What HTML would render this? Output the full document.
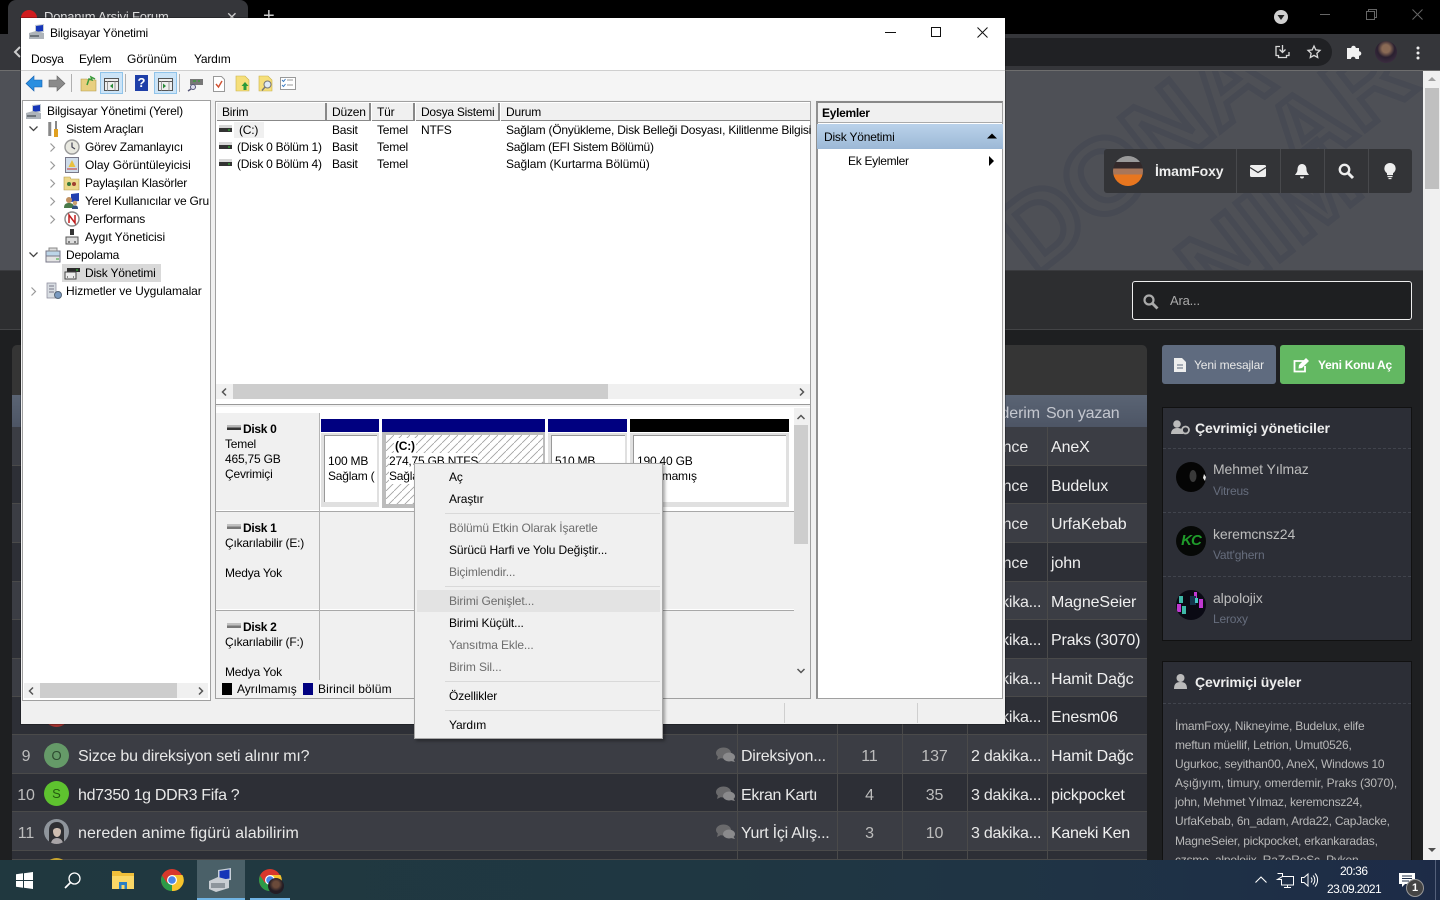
<!DOCTYPE html>
<html lang="tr"><head><meta charset="utf-8"><title>Bilgisayar Yönetimi</title>
<style>
html,body{margin:0;padding:0;width:1440px;height:900px;overflow:hidden;background:#1e1f21}
body{position:relative;font-family:"Liberation Sans",sans-serif}
.a,.t,.w,.f,.m{position:absolute}
.t{white-space:nowrap;line-height:16px;font-size:12px;color:#000;letter-spacing:-.2px}
.f{white-space:nowrap;line-height:20px;font-size:16px;color:#e8e8e8;letter-spacing:-.1px}
.m{white-space:nowrap;line-height:16px;font-size:12px;color:#000;left:449px;letter-spacing:-.12px}
.g{color:#6d6d6d}
.n{color:#bdbdbd;text-align:center}
.r{position:absolute;left:12px;width:1135px}
.r1{background:#3b3d44;border-bottom:1px solid #4a4a4a;box-sizing:border-box}
.r2{background:#2d2f36;border-bottom:1px solid #4a4a4a;box-sizing:border-box}
.v{position:absolute;width:1px;top:427px;height:433px;background:#4a4a4a}
.s{position:absolute;background:#d9d9d9;height:1px;left:445px;width:215px}
.d{position:absolute;left:1163px;width:248px;height:0;border-top:1px dashed #41444d}
svg{position:absolute;overflow:visible}
</style></head><body>

<!-- Chrome -->
<div class="a" style="left:0;top:0;width:1440px;height:34px;background:#000"></div>
<div class="a" style="left:8px;top:0;width:240px;height:34px;background:#35363a;border-radius:8px 8px 0 0"></div>
<div class="a" style="left:21px;top:10px;width:16px;height:16px;border-radius:50%;background:#d01c1f"></div>
<div class="t" style="left:44px;top:9px;font-size:13px;color:#ddd">Donanım Arşivi Forum</div>
<div class="t" style="left:226px;top:9px;color:#ccc;font-size:14px">✕</div>
<div class="t" style="left:263px;top:8px;color:#ccc;font-size:20px">+</div>
<div class="a" style="left:0;top:34px;width:1440px;height:36px;background:#35363a"></div>
<div class="a" style="left:1000px;top:38px;width:332px;height:28px;background:#202124;border-radius:0 14px 14px 0"></div>
<div class="a" style="left:0;top:70px;width:1440px;height:1px;background:#6e6e6e"></div>
<svg style="left:14px;top:46px" width="8" height="12"><path d="M6 1 1 6l5 5" fill="none" stroke="#ccc" stroke-width="2"/></svg>
<svg style="left:1274px;top:10px" width="14" height="14"><circle cx="7" cy="7" r="7" fill="#d0d0d0"/><path d="M3.500 5h7L7 10z" fill="#222"/></svg>
<div class="a" style="left:1320px;top:14px;width:10px;height:1px;background:#666"></div>
<svg style="left:1366px;top:9px" width="11" height="11"><path d="M.5 2.500h8v8h-8zM2.500 2.500v-2h8v8h-2" fill="none" stroke="#666"/></svg>
<svg style="left:1412px;top:9px" width="11" height="11"><path d="M.5.500l10 10M10.500.500l-10 10" stroke="#666"/></svg>
<svg style="left:1275px;top:45px" width="15" height="15"><path d="M5 1.500H1v9h2.500v2h8v-2H14V7M7.500 0v7M4.500 4.500l3 3 3-3" fill="none" stroke="#d8d8d8" stroke-width="1.300"/></svg>
<svg style="left:1307px;top:45px" width="14" height="14"><path d="M7 1l1.800 3.900 4.200.5-3.100 2.900.8 4.200L7 10.400l-3.700 2.100.8-4.200L1 5.400l4.200-.5z" fill="none" stroke="#d8d8d8" stroke-width="1.300"/></svg>
<svg style="left:1347px;top:44px" width="15" height="15"><path d="M0 4h4.200a2.300 2.300 0 1 1 4.600 0H12v3.200a2.300 2.300 0 1 1 0 4.600V15H8.500a2.300 2.300 0 1 0-4.600 0H0z" fill="#f2f2f2"/></svg>
<div class="a" style="left:1375px;top:41px;width:22px;height:22px;border-radius:50%;background:radial-gradient(circle at 50% 35%,#8a6a55 0 22%,#2a2030 48%,#46354a 100%)"></div>
<svg style="left:1416px;top:46px" width="4" height="14"><circle cx="2" cy="2" r="1.500" fill="#eee"/><circle cx="2" cy="7" r="1.500" fill="#eee"/><circle cx="2" cy="12" r="1.500" fill="#eee"/></svg>

<!-- Forum header -->
<div class="a" style="left:0;top:71px;width:1423px;height:199px;background:#4e5056;overflow:hidden">
<svg width="1423" height="199" style="left:0;top:0">
<g font-family="Liberation Sans,sans-serif" font-size="105" font-weight="700" fill="none" stroke="#474a53" stroke-width="6">
<text x="1035" y="205" transform="rotate(-38 1035 205)">DONA</text>
<text x="1215" y="240" transform="rotate(-38 1215 240)">NIM</text>
<text x="1300" y="110" transform="rotate(-38 1300 110)">AR</text>
</g></svg></div>
<div class="a" style="left:0;top:270px;width:1423px;height:1px;background:#3a3b3e"></div>
<div class="a" style="left:0;top:271px;width:1423px;height:58px;background:#2d2e30"></div>
<div class="a" style="left:0;top:329px;width:1423px;height:1px;background:#434446"></div>
<div class="a" style="left:0;top:330px;width:1423px;height:530px;background:#1e1f21"></div>

<!-- User bar -->
<div class="a" style="left:1104px;top:149px;width:308px;height:44px;background:#333437;border-radius:3px"></div>
<div class="a" style="left:1236px;top:149px;width:1px;height:44px;background:#48494c"></div>
<div class="a" style="left:1280px;top:149px;width:1px;height:44px;background:#48494c"></div>
<div class="a" style="left:1324px;top:149px;width:1px;height:44px;background:#48494c"></div>
<div class="a" style="left:1368px;top:149px;width:1px;height:44px;background:#48494c"></div>
<div class="a" style="left:1113px;top:156px;width:30px;height:30px;border-radius:50%;background:linear-gradient(#9a9a9a 0 20%,#33292a 20% 42%,#a8765a 42% 62%,#e8761f 62%)"></div>
<div class="t" style="left:1155px;top:163px;font-size:14px;font-weight:700;color:#eee;letter-spacing:-.1px">İmamFoxy</div>
<svg style="left:1250px;top:165px" width="16" height="12"><rect width="16" height="12" rx="1.500" fill="#eee"/><path d="M0 2.500l8 5 8-5" fill="none" stroke="#333437" stroke-width="1.300"/></svg>
<svg style="left:1295px;top:163px" width="14" height="16"><path d="M7 1c3 0 4.500 2.500 4.500 5.500 0 2.500 1.500 4 2.500 5.500H0c1-1.500 2.500-3 2.500-5.500C2.500 3.500 4 1 7 1z" fill="#eee"/><path d="M5 13.500a2 2 0 0 0 4 0z" fill="#eee"/></svg>
<svg style="left:1338px;top:163px" width="16" height="16"><circle cx="6.500" cy="6.500" r="4.700" fill="none" stroke="#eee" stroke-width="2.400"/><path d="M10 10l5 5" stroke="#eee" stroke-width="3"/></svg>
<svg style="left:1384px;top:163px" width="12" height="16"><path d="M6 0a5.500 5.500 0 0 1 3 10.200V12H3v-1.800A5.500 5.500 0 0 1 6 0z" fill="#eee"/><path d="M3.500 13.500h5M4.500 15.500h3" stroke="#eee" stroke-width="1.300"/></svg>

<!-- Search -->
<div class="a" style="left:1132px;top:281px;width:278px;height:37px;background:#1e1f21;border:1px solid #eee;border-radius:3px"></div>
<svg style="left:1143px;top:294px" width="15" height="15"><circle cx="6" cy="6" r="4.500" fill="none" stroke="#aaa" stroke-width="2.200"/><path d="M9.500 9.500l5 5" stroke="#aaa" stroke-width="2.800"/></svg>
<div class="t" style="left:1170px;top:293px;font-size:13px;color:#aaa">Ara...</div>

<!-- Buttons -->
<div class="a" style="left:1162px;top:345px;width:114px;height:39px;background:#5f6b7f;border-radius:3px"></div>
<svg style="left:1174px;top:358px" width="12" height="14"><path d="M0 0h8l4 4v10H0z" fill="#eee"/><path d="M3 7h6M3 10h6" stroke="#5f6b7f"/></svg>
<div class="t" style="left:1194px;top:357px;color:#e8e8e8;letter-spacing:-.12px">Yeni mesajlar</div>
<div class="a" style="left:1280px;top:345px;width:125px;height:39px;background:#63b862;border-radius:3px"></div>
<svg style="left:1293px;top:358px" width="17" height="15"><path d="M11 3H1.500v10.500H12V8" fill="none" stroke="#fff" stroke-width="1.800"/><path d="M6 7l7-7 3 3-7 7-3.500.5z" fill="#fff"/></svg>
<div class="t" style="left:1318px;top:357px;color:#fff;font-weight:700;letter-spacing:-.25px">Yeni Konu Aç</div>

<!-- Table -->
<div class="a" style="left:12px;top:345px;width:1135px;height:50px;background:#353535;border-radius:5px 5px 0 0"></div>
<div class="r" style="top:395px;height:32px;background:linear-gradient(#5a6474,#4d5565)"></div>
<div class="r r1" style="top:427px;height:39px"></div>
<div class="r r2" style="top:466px;height:38px"></div>
<div class="r r1" style="top:504px;height:39px"></div>
<div class="r r2" style="top:543px;height:39px"></div>
<div class="r r1" style="top:582px;height:38px"></div>
<div class="r r2" style="top:620px;height:39px"></div>
<div class="r r1" style="top:659px;height:38px"></div>
<div class="r r2" style="top:697px;height:38px"></div>
<div class="r r1" style="top:735px;height:39px"></div>
<div class="r r2" style="top:774px;height:38px"></div>
<div class="r r1" style="top:812px;height:39px"></div>
<div class="r r2" style="top:851px;height:9px"></div>
<div class="v" style="left:737px"></div><div class="v" style="left:837px"></div><div class="v" style="left:902px"></div><div class="v" style="left:967px"></div><div class="v" style="left:1047px"></div>

<div class="f" style="left:1005px;top:404px;color:#c4c7cf;width:35px;overflow:hidden;direction:rtl">derim</div>
<div class="f" style="left:1046px;top:404px;color:#c4c7cf;letter-spacing:-.25px">Son yazan</div>

<div class="f" style="left:971px;top:438px">Az önce</div><div class="f" style="left:1051px;top:438px;color:#f0f0f0">AneX</div>
<div class="f" style="left:971px;top:477px">Az önce</div><div class="f" style="left:1051px;top:477px;color:#f0f0f0">Budelux</div>
<div class="f" style="left:971px;top:515px">Az önce</div><div class="f" style="left:1051px;top:515px;color:#f0f0f0">UrfaKebab</div>
<div class="f" style="left:971px;top:554px">Az önce</div><div class="f" style="left:1051px;top:554px;color:#f0f0f0">john</div>
<div class="f" style="left:971px;top:593px;letter-spacing:-.25px">1 dakika...</div><div class="f" style="left:1051px;top:593px;color:#f0f0f0">MagneSeier</div>
<div class="f" style="left:971px;top:631px;letter-spacing:-.25px">1 dakika...</div><div class="f" style="left:1051px;top:631px;color:#f0f0f0;letter-spacing:-.2px">Praks (3070)</div>
<div class="f" style="left:971px;top:670px;letter-spacing:-.25px">1 dakika...</div><div class="f" style="left:1051px;top:670px;color:#f0f0f0">Hamit Dağc</div>
<div class="f" style="left:971px;top:708px;letter-spacing:-.25px">2 dakika...</div><div class="f" style="left:1051px;top:708px;color:#f0f0f0">Enesm06</div>

<div class="a" style="left:44px;top:702px;width:25px;height:25px;border-radius:50%;background:#a3322f"></div>

<div class="f n" style="left:14px;top:747px;width:24px">9</div>
<div class="a" style="left:44px;top:743px;width:25px;height:25px;border-radius:50%;background:#659a68;color:#2d4a30;font-size:13px;line-height:25px;text-align:center">O</div>
<div class="f" style="left:78px;top:747px;letter-spacing:-.2px">Sizce bu direksiyon seti alınır mı?</div>
<div class="f" style="left:741px;top:747px;letter-spacing:-.25px">Direksiyon...</div>
<div class="f n" style="left:838px;top:747px;width:63px">11</div><div class="f n" style="left:903px;top:747px;width:63px">137</div>
<div class="f" style="left:971px;top:747px;letter-spacing:-.25px">2 dakika...</div><div class="f" style="left:1051px;top:747px;color:#f0f0f0">Hamit Dağc</div>

<div class="f n" style="left:14px;top:786px;width:24px">10</div>
<div class="a" style="left:44px;top:781px;width:25px;height:25px;border-radius:50%;background:#5ec22f;color:#245a10;font-size:13px;line-height:25px;text-align:center">S</div>
<div class="f" style="left:78px;top:786px;letter-spacing:-.32px">hd7350 1g DDR3 Fifa ?</div>
<div class="f" style="left:741px;top:786px;letter-spacing:-.35px">Ekran Kartı</div>
<div class="f n" style="left:838px;top:786px;width:63px">4</div><div class="f n" style="left:903px;top:786px;width:63px">35</div>
<div class="f" style="left:971px;top:786px;letter-spacing:-.25px">3 dakika...</div><div class="f" style="left:1051px;top:786px;color:#f0f0f0;letter-spacing:-.2px">pickpocket</div>

<div class="f n" style="left:14px;top:824px;width:24px">11</div>
<svg style="left:44px;top:819px" width="25" height="25"><defs><clipPath id="av"><circle cx="12.500" cy="12.500" r="12.500"/></clipPath></defs><g clip-path="url(#av)"><rect width="25" height="25" fill="#8f959c"/><path d="M5 25V11C5 5 9 3 13 3s7 3 7 8v14z" fill="#2f3034"/><path d="M9 12c0-2 2-3 4-3s4 1 4 3c0 4-2 6-4 6s-4-2-4-6z" fill="#d0bfb2"/><path d="M7 25c0-4 3-6 6-6s6 2 6 6z" fill="#a9a5a8"/></g></svg>
<div class="f" style="left:78px;top:824px;letter-spacing:.07px">nereden anime figürü alabilirim</div>
<div class="f" style="left:741px;top:824px;letter-spacing:-.25px">Yurt İçi Alış...</div>
<div class="f n" style="left:838px;top:824px;width:63px">3</div><div class="f n" style="left:903px;top:824px;width:63px">10</div>
<div class="f" style="left:971px;top:824px;letter-spacing:-.25px">3 dakika...</div><div class="f" style="left:1051px;top:824px;color:#f0f0f0;letter-spacing:-.3px">Kaneki Ken</div>

<div class="a" style="left:44px;top:858px;width:25px;height:25px;border-radius:50%;background:#c9a52f"></div>

<svg style="left:716px;top:747px" width="20" height="16"><ellipse cx="7.500" cy="6" rx="7.500" ry="5.500" fill="#6a6a6c"/><path d="M2 9l-1 4 4-2z" fill="#6a6a6c"/><ellipse cx="13" cy="10" rx="6" ry="4.500" fill="#8a8a8c"/><path d="M17 12l2 3-4-1z" fill="#8a8a8c"/></svg>
<svg style="left:716px;top:786px" width="20" height="16"><ellipse cx="7.500" cy="6" rx="7.500" ry="5.500" fill="#6a6a6c"/><path d="M2 9l-1 4 4-2z" fill="#6a6a6c"/><ellipse cx="13" cy="10" rx="6" ry="4.500" fill="#8a8a8c"/><path d="M17 12l2 3-4-1z" fill="#8a8a8c"/></svg>
<svg style="left:716px;top:824px" width="20" height="16"><ellipse cx="7.500" cy="6" rx="7.500" ry="5.500" fill="#6a6a6c"/><path d="M2 9l-1 4 4-2z" fill="#6a6a6c"/><ellipse cx="13" cy="10" rx="6" ry="4.500" fill="#8a8a8c"/><path d="M17 12l2 3-4-1z" fill="#8a8a8c"/></svg>

<!-- Sidebar panels -->
<div class="a" style="left:1162px;top:407px;width:248px;height:232px;background:#2c2e36;border:1px solid #111"></div>
<svg style="left:1171px;top:420px" width="19" height="15"><circle cx="6" cy="4" r="3.800" fill="#bbb"/><path d="M0 14c0-4 2.500-6 6-6s5 1 6 3v3z" fill="#bbb"/><circle cx="14.500" cy="10" r="3.500" fill="none" stroke="#bbb" stroke-width="1.800"/></svg>
<div class="t" style="left:1195px;top:420px;font-size:14px;font-weight:700;color:#eee;letter-spacing:-.1px">Çevrimiçi yöneticiler</div>
<div class="d" style="top:448px"></div><div class="d" style="top:512px"></div><div class="d" style="top:576px"></div>
<svg style="left:1176px;top:462px" width="30" height="30"><circle cx="15" cy="15" r="15" fill="#050505"/><ellipse cx="17" cy="14" rx="3.500" ry="6" fill="#3a3a3a"/><path d="M28 12l2 3-1 4-2-3z" fill="#e8e8e8"/></svg>
<div class="t" style="left:1213px;top:461px;font-size:14px;color:#bdbdbd;letter-spacing:-.1px">Mehmet Yılmaz</div>
<div class="t" style="left:1213px;top:483px;color:#666d7d">Vitreus</div>
<div class="a" style="left:1176px;top:526px;width:30px;height:30px;border-radius:50%;background:#060806;color:#1f9a2a;font-weight:700;font-style:italic;font-size:15px;line-height:30px;text-align:center;letter-spacing:-1px">KC</div>
<div class="t" style="left:1213px;top:526px;font-size:14px;color:#bdbdbd;letter-spacing:-.1px">keremcnsz24</div>
<div class="t" style="left:1213px;top:547px;color:#666d7d">Vatt'ghern</div>
<svg style="left:1176px;top:590px" width="30" height="30"><defs><clipPath id="av2"><circle cx="15" cy="15" r="15"/></clipPath></defs><g clip-path="url(#av2)"><rect width="30" height="30" fill="#0a0a14"/><path d="M3 6h4v7H3zM6 16h4v8H6z" fill="#3fb8a8"/><path d="M1 14h4v8H1zM23 9h4v9h-4zM18 2h3v6h-3z" fill="#c038d0"/><path d="M14 6h6v9h-6z" fill="#13344a"/><path d="M19 8h3v5h-3z" fill="#46c8c8"/></g></svg>
<div class="t" style="left:1213px;top:590px;font-size:14px;color:#bdbdbd;letter-spacing:-.1px">alpolojix</div>
<div class="t" style="left:1213px;top:611px;color:#666d7d">Leroxy</div>

<div class="a" style="left:1162px;top:661px;width:248px;height:210px;background:#2c2e36;border:1px solid #111"></div>
<svg style="left:1174px;top:674px" width="13" height="15"><circle cx="6.500" cy="4" r="4" fill="#bbb"/><path d="M0 15c0-5 2-7 6.500-7S13 10 13 15z" fill="#bbb"/></svg>
<div class="t" style="left:1195px;top:674px;font-size:14px;font-weight:700;color:#eee;letter-spacing:-.12px">Çevrimiçi üyeler</div>
<div class="d" style="top:703px"></div>
<div class="t" style="left:1175px;top:718px;color:#b8b8b8;letter-spacing:-.2px">İmamFoxy, Nikneyime, Budelux, elife</div>
<div class="t" style="left:1175px;top:737px;color:#b8b8b8;letter-spacing:-.2px">meftun müellif, Letrion, Umut0526,</div>
<div class="t" style="left:1175px;top:756px;color:#b8b8b8;letter-spacing:-.2px">Ugurkoc, seyithan00, AneX, Windows 10</div>
<div class="t" style="left:1175px;top:775px;color:#b8b8b8;letter-spacing:-.12px">Aşığıyım, timury, omerdemir, Praks (3070),</div>
<div class="t" style="left:1175px;top:794px;color:#b8b8b8;letter-spacing:-.2px">john, Mehmet Yılmaz, keremcnsz24,</div>
<div class="t" style="left:1175px;top:813px;color:#b8b8b8;letter-spacing:-.2px">UrfaKebab, 6n_adam, Arda22, CapJacke,</div>
<div class="t" style="left:1175px;top:833px;color:#b8b8b8;letter-spacing:-.2px">MagneSeier, pickpocket, erkankaradas,</div>
<div class="t" style="left:1175px;top:852px;color:#b8b8b8;letter-spacing:-.2px">czsmo, alpolojix, RaZeRoSc, Pyken</div>

<!-- Page scrollbar -->
<div class="a" style="left:1423px;top:71px;width:17px;height:789px;background:#f0f0f0"></div>
<div class="a" style="left:1425px;top:88px;width:14px;height:101px;background:#c0c0c0"></div>
<svg style="left:1428px;top:77px" width="8" height="5"><path d="M0 4h8L4 0z" fill="#a0a0a0"/></svg>
<svg style="left:1428px;top:848px" width="8" height="5"><path d="M0 0h8L4 4z" fill="#505050"/></svg>

<!-- Taskbar -->
<div class="a" style="left:0;top:860px;width:1440px;height:40px;background:linear-gradient(90deg,#20383f 0,#1f3742 50%,#1f3345 75%,#1d2b47 100%)"></div>
<svg style="left:16px;top:872px" width="17" height="17"><path d="M0 2.300 7 1.300v6.700H0zM8 1.200 17 0v8H8zM0 9h7v6.700l-7-1zM8 9h9v8l-9-1.200z" fill="#fff"/></svg>
<svg style="left:64px;top:872px" width="17" height="17"><circle cx="10.500" cy="6.500" r="5.500" fill="none" stroke="#fff" stroke-width="1.300"/><path d="M6.500 10.500 1 16" stroke="#fff" stroke-width="1.700"/></svg>
<svg style="left:112px;top:871px" width="22" height="18"><path d="M0 0h8l2 2h12v16H0z" fill="#f0bf3a"/><path d="M0 5h22v13H0z" fill="#fad766"/><path d="M7 11h8v7h-2.500v-4h-3v4H7z" fill="#2a7fc4"/></svg>
<svg style="left:161px;top:869px" width="22" height="22"><circle cx="11" cy="11" r="11" fill="#d8382c"/><path d="M11 11 1.500 16.500A11 11 0 0 0 11 22z" fill="#2a9c48"/><path d="M11 11V22A11 11 0 0 0 21.500 6H11z" fill="#f6c42c"/><path d="M11 11 1.500 16.500 A11 11 0 0 1 1 6.500L6 14z" fill="#2a9c48"/><circle cx="11" cy="11" r="5" fill="#fff"/><circle cx="11" cy="11" r="3.800" fill="#4a86e8"/></svg>
<div class="a" style="left:197px;top:860px;width:48px;height:40px;background:#4a6068"></div>
<div class="a" style="left:197px;top:898px;width:48px;height:2px;background:#70b4e4"></div>
<svg style="left:209px;top:868px" width="24" height="24"><path d="M9 2 22 0v12L9 13z" fill="#c8d0d8"/><path d="M10.500 3 20.500 1.500v9L10.500 12z" fill="#1636b8"/><path d="M0 13 9 9l11 3v8L7 24l-7-3z" fill="#c9ced3"/><path d="M2 15h14v5H2z" fill="#8d959c"/></svg>
<div class="a" style="left:250px;top:898px;width:40px;height:2px;background:#70b4e4"></div>
<svg style="left:259px;top:869px" width="22" height="22"><circle cx="11" cy="11" r="11" fill="#d8382c"/><path d="M11 11 1.500 16.500A11 11 0 0 0 11 22z" fill="#2a9c48"/><path d="M11 11V22A11 11 0 0 0 21.500 6H11z" fill="#f6c42c"/><path d="M11 11 1.500 16.500 A11 11 0 0 1 1 6.500L6 14z" fill="#2a9c48"/><circle cx="11" cy="11" r="5" fill="#fff"/><circle cx="11" cy="11" r="3.800" fill="#4a86e8"/></svg>
<div class="a" style="left:268px;top:878px;width:16px;height:16px;border-radius:50%;background:radial-gradient(circle at 50% 40%,#6a4a3a 0 25%,#231c24 55%)"></div>
<svg style="left:1255px;top:876px" width="12" height="7"><path d="M.5 6.500 6 1l5.500 5.500" fill="none" stroke="#fff" stroke-width="1.100"/></svg>
<svg style="left:1277px;top:873px" width="17" height="15"><path d="M.5.500h5v3M5.500 3.500h11v8.500h-12V6.500H.5zM10.500 12v2.500M7 14.500h7" fill="none" stroke="#fff"/></svg>
<svg style="left:1301px;top:873px" width="17" height="14"><path d="M.5 4.500h2.500L7 1v12L3 9.500H.5z" fill="none" stroke="#fff"/><path d="M10 4.500a3.500 3.500 0 0 1 0 5M12 2.500a6.500 6.500 0 0 1 0 9M14 .500a9.500 9.500 0 0 1 0 13" fill="none" stroke="#fff"/></svg>
<div class="t" style="left:1340px;top:863px;color:#fff;letter-spacing:-.5px">20:36</div>
<div class="t" style="left:1327px;top:881px;color:#fff;letter-spacing:-.6px">23.09.2021</div>
<svg style="left:1399px;top:873px" width="16" height="14"><path d="M0 0h16v11H6l-3 3v-3H0z" fill="#fff"/><path d="M3 3h10M3 5.500h10M3 8h7" stroke="#20304a"/></svg>
<div class="a" style="left:1406px;top:879px;width:16px;height:16px;border-radius:50%;background:#444;border:1px solid #999;color:#fff;font-size:11px;font-weight:700;line-height:16px;text-align:center">1</div>
<div class="a" style="left:1435px;top:860px;width:1px;height:40px;background:#54607a"></div>

<!-- MMC Window -->
<div class="w" id="win" style="left:21px;top:18px;width:984px;height:706px;background:#f0f0f0;box-shadow:0 0 0 1px rgba(0,0,0,.25)"></div>
<div class="a" style="left:21px;top:18px;width:984px;height:52px;background:#fff"></div>
<div class="a" style="left:21px;top:70px;width:984px;height:1px;background:#cfcfcf"></div>
<div class="a" style="left:21px;top:71px;width:984px;height:29px;background:#f5f5f5"></div>
<svg style="left:29px;top:24px" width="16" height="16"><path d="M6 1 15 0v8L6 9z" fill="#c5ccd3"/><path d="M7 2l7-1v6l-7 1z" fill="#1636b8"/><path d="M0 9l7-2 8 2v6H0z" fill="#aeb4ba"/><path d="M1 11h9v2H1z" fill="#6c737a"/></svg>
<div class="t" style="left:50px;top:25px">Bilgisayar Yönetimi</div>
<div class="a" style="left:885px;top:32px;width:11px;height:1px;background:#111"></div>
<div class="a" style="left:931px;top:27px;width:8px;height:8px;border:1px solid #111"></div>
<svg style="left:977px;top:27px" width="11" height="11"><path d="M.5.500l10 10M10.500.500l-10 10" stroke="#111"/></svg>
<div class="t" style="left:31px;top:51px;letter-spacing:-.3px">Dosya</div>
<div class="t" style="left:79px;top:51px">Eylem</div>
<div class="t" style="left:127px;top:51px;letter-spacing:-.02px">Görünüm</div>
<div class="t" style="left:194px;top:51px">Yardım</div>

<!-- Toolbar -->
<svg style="left:26px;top:76px" width="16" height="15"><path d="M8 0v4h8v7H8v4L0 7.500z" fill="#2a8fe0" stroke="#1560b0" stroke-width=".6"/></svg>
<svg style="left:49px;top:76px" width="16" height="15"><path d="M8 0v4H0v7h8v4l8-7.500z" fill="#8a8a8a" stroke="#666" stroke-width=".6"/></svg>
<div class="a" style="left:71px;top:74px;width:1px;height:18px;background:#b0b0b0"></div>
<svg style="left:81px;top:76px" width="15" height="15"><path d="M0 3h6l1 1h8v11H0z" fill="#e8cf80" stroke="#b49a4a" stroke-width=".6"/><path d="M6 9l2-6 3 1-1-3 4 2" fill="none" stroke="#3a9a3a" stroke-width="1.500"/></svg>
<div class="a" style="left:100px;top:72px;width:21px;height:20px;background:#cce4f7;border:1px solid #90c4ea"></div>
<svg style="left:104px;top:78px" width="15" height="13"><path d="M.5.500h14v12H.5zM.5 3.500h14" fill="#eee" stroke="#555"/><path d="M9 5.500l-3 2.500 3 2.500z" fill="#2a8a3a"/><path d="M3.500 3.500v9M11 3.500v9" stroke="#999"/></svg>
<div class="a" style="left:125px;top:74px;width:1px;height:18px;background:#b0b0b0"></div>
<div class="a" style="left:135px;top:75px;width:13px;height:16px;background:#1f3fa8;color:#fff;font-weight:700;font-size:13px;line-height:16px;text-align:center">?</div>
<div class="a" style="left:154px;top:72px;width:21px;height:20px;background:#cce4f7;border:1px solid #90c4ea"></div>
<svg style="left:158px;top:78px" width="15" height="13"><path d="M.5.500h14v12H.5zM.5 3.500h14" fill="#eee" stroke="#555"/><path d="M5 5.500l3 2.500-3 2.500z" fill="#2a8a3a"/><path d="M3.500 3.500v9M11 3.500v9" stroke="#999"/></svg>
<div class="a" style="left:179px;top:74px;width:1px;height:18px;background:#b0b0b0"></div>
<svg style="left:188px;top:78px" width="15" height="13"><path d="M2 1h13v6H2z" fill="#777"/><path d="M5 3h3M10 3h2" stroke="#2a2"/><circle cx="5" cy="9" r="2.500" fill="#dde" stroke="#557"/><path d="M3 11l-3 2" stroke="#557" stroke-width="1.400"/></svg>
<svg style="left:213px;top:76px" width="12" height="16"><path d="M.5.500h8l3 3v12H.5z" fill="#fff" stroke="#999"/><path d="M3 8l2.500 3L9 5" fill="none" stroke="#d05030" stroke-width="1.400"/></svg>
<svg style="left:236px;top:76px" width="14" height="15"><path d="M0 0h9l4 4v11H0z" fill="#f6df7a" stroke="#c8b24a" stroke-width=".6"/><path d="M9 6l-3.500 4h2v4h3v-4h2z" fill="#2a9a3a"/></svg>
<svg style="left:259px;top:76px" width="14" height="15"><path d="M0 0h9l4 4v11H0z" fill="#f6df7a" stroke="#c8b24a" stroke-width=".6"/><circle cx="8.500" cy="8.500" r="3.500" fill="#dfeaf5" stroke="#777"/><path d="M6 11l-3 3.500" stroke="#777" stroke-width="1.400"/></svg>
<svg style="left:280px;top:77px" width="16" height="13"><path d="M.5.500h15v12H.5z" fill="#fff" stroke="#999"/><path d="M2 3l1.500 1.500L5.500 2M2 8l1.500 1.500L5.500 7" fill="none" stroke="#3a7ac0"/><path d="M7 3h6M7 8h6" stroke="#999"/></svg>

<!-- Left pane -->
<div class="a" style="left:22px;top:100px;width:187px;height:599px;background:#fff;border:1px solid #a0a0a0"></div>
<svg style="left:26px;top:104px" width="16" height="16"><path d="M6 1 15 0v8L6 9z" fill="#c5ccd3"/><path d="M7 2l7-1v6l-7 1z" fill="#1636b8"/><path d="M0 9l7-2 8 2v6H0z" fill="#aeb4ba"/><path d="M1 11h9v2H1z" fill="#6c737a"/></svg>
<div class="t" style="left:47px;top:103px;letter-spacing:-.15px">Bilgisayar Yönetimi (Yerel)</div>
<svg style="left:29px;top:126px" width="9" height="6"><path d="M.5.500 4.500 4.500 8.500.500" fill="none" stroke="#444" stroke-width="1.300"/></svg>
<svg style="left:47px;top:121px" width="12" height="16"><path d="M2 1v14M3.500 1v14" stroke="#888" stroke-width="1.500"/><rect x="7" y="8" width="4" height="8" fill="#e0a020"/><path d="M9 0v8" stroke="#888" stroke-width="2"/></svg>
<div class="t" style="left:66px;top:121px">Sistem Araçları</div>
<svg style="left:50px;top:143px" width="6" height="9"><path d="M.5.500 4.500 4.500.500 8.500" fill="none" stroke="#999" stroke-width="1.200"/></svg>
<svg style="left:64px;top:139px" width="16" height="16"><circle cx="8" cy="8" r="7" fill="#e8e8e0" stroke="#999" stroke-width="1.400"/><path d="M8 3.500V8l3 2" fill="none" stroke="#445" stroke-width="1.200"/></svg>
<div class="t" style="left:85px;top:139px">Görev Zamanlayıcı</div>
<svg style="left:50px;top:161px" width="6" height="9"><path d="M.5.500 4.500 4.500.500 8.500" fill="none" stroke="#999" stroke-width="1.200"/></svg>
<svg style="left:65px;top:157px" width="14" height="16"><path d="M.5.500h13v15H.5z" fill="#cfdcea" stroke="#778"/><path d="M7 3 10.500 10h-7z" fill="#e8c040"/><path d="M2 12h10" stroke="#c03030"/></svg>
<div class="t" style="left:85px;top:157px;letter-spacing:-.05px">Olay Görüntüleyicisi</div>
<svg style="left:50px;top:179px" width="6" height="9"><path d="M.5.500 4.500 4.500.500 8.500" fill="none" stroke="#999" stroke-width="1.200"/></svg>
<svg style="left:64px;top:176px" width="15" height="14"><path d="M0 1h6l1 2h8v11H0z" fill="#ecd88a" stroke="#b49a4a" stroke-width=".6"/><circle cx="5" cy="8" r="2" fill="#3a7a3a"/><circle cx="10" cy="8" r="2" fill="#a04030"/></svg>
<div class="t" style="left:85px;top:175px">Paylaşılan Klasörler</div>
<svg style="left:50px;top:197px" width="6" height="9"><path d="M.5.500 4.500 4.500.500 8.500" fill="none" stroke="#999" stroke-width="1.200"/></svg>
<svg style="left:64px;top:193px" width="16" height="16"><path d="M7 1l8-1v8l-8 1z" fill="#2040b0"/><circle cx="5" cy="7" r="3" fill="#c09060"/><path d="M0 15c0-4 2-5 5-5s5 1 5 5z" fill="#4a7a4a"/><circle cx="11" cy="10" r="2.200" fill="#c8a070"/><path d="M8 16c0-3 1-3.500 3-3.500s3 .5 3 3.500z" fill="#305080"/></svg>
<div class="t" style="left:85px;top:193px;width:124px;overflow:hidden">Yerel Kullanıcılar ve Gru</div>
<svg style="left:50px;top:215px" width="6" height="9"><path d="M.5.500 4.500 4.500.500 8.500" fill="none" stroke="#999" stroke-width="1.200"/></svg>
<svg style="left:64px;top:211px" width="16" height="16"><circle cx="8" cy="8" r="7" fill="#fff" stroke="#888" stroke-width="1.400"/><path d="M5 12V4l6 8V4" fill="none" stroke="#c02020" stroke-width="1.500"/></svg>
<div class="t" style="left:85px;top:211px">Performans</div>
<svg style="left:65px;top:229px" width="14" height="16"><path d="M5 0h4v6H5z" fill="#333"/><path d="M1 8h12v7H1z" fill="#dcdcdc" stroke="#555"/><path d="M3 13h2M9 13h2" stroke="#222"/></svg>
<div class="t" style="left:85px;top:229px;letter-spacing:-.1px">Aygıt Yöneticisi</div>
<svg style="left:29px;top:252px" width="9" height="6"><path d="M.5.500 4.500 4.500 8.500.500" fill="none" stroke="#444" stroke-width="1.300"/></svg>
<svg style="left:45px;top:247px" width="16" height="16"><path d="M1 4h14v5H1z" fill="#bcd5e8" stroke="#778"/><path d="M4 1h8v3H4z" fill="#ddd" stroke="#888"/><path d="M1 9h14v6H1z" fill="#e4e4e4" stroke="#778"/><path d="M11 12h3" stroke="#3a3"/></svg>
<div class="t" style="left:66px;top:247px">Depolama</div>
<div class="a" style="left:62px;top:264px;width:99px;height:18px;background:#d9d9d9"></div>
<svg style="left:64px;top:268px" width="16" height="11"><path d="M3 0h13v4H3z" fill="#2a2a2a"/><path d="M12 2h2" stroke="#3c3"/><path d="M1 4h11v7H1z" fill="#ececec" stroke="#444"/><path d="M3 9h1M9 9h1" stroke="#222"/></svg>
<div class="t" style="left:85px;top:265px">Disk Yönetimi</div>
<svg style="left:31px;top:287px" width="6" height="9"><path d="M.5.500 4.500 4.500.500 8.500" fill="none" stroke="#999" stroke-width="1.200"/></svg>
<svg style="left:47px;top:283px" width="15" height="16"><path d="M0 0h9v15H0z" fill="#d8dde2" stroke="#889" stroke-width=".7"/><path d="M2 3h5M2 6h5M2 9h5" stroke="#778"/><circle cx="11" cy="12" r="3.500" fill="#7a9ac0" stroke="#567"/></svg>
<div class="t" style="left:66px;top:283px;letter-spacing:-.07px">Hizmetler ve Uygulamalar</div>
<div class="a" style="left:24px;top:683px;width:184px;height:15px;background:#f0f0f0"></div>
<div class="a" style="left:40px;top:683px;width:137px;height:15px;background:#cdcdcd"></div>
<svg style="left:28px;top:687px" width="6" height="8"><path d="M5 .500 1.500 4 5 7.500" fill="none" stroke="#555" stroke-width="1.500"/></svg>
<svg style="left:198px;top:687px" width="6" height="8"><path d="M1 .500 4.500 4 1 7.500" fill="none" stroke="#555" stroke-width="1.500"/></svg>

<!-- Center pane -->
<div class="a" style="left:215px;top:101px;width:596px;height:598px;background:#fff;border:1px solid #a0a0a0;box-sizing:border-box"></div>
<div class="a" style="left:217px;top:103px;width:108px;height:17px;background:#f0f0f0;border-right:2px solid #888;border-bottom:1px solid #888"></div>
<div class="a" style="left:327px;top:103px;width:42px;height:17px;background:#f0f0f0;border-right:2px solid #888;border-bottom:1px solid #888"></div>
<div class="a" style="left:372px;top:103px;width:41px;height:17px;background:#f0f0f0;border-right:2px solid #888;border-bottom:1px solid #888"></div>
<div class="a" style="left:416px;top:103px;width:82px;height:17px;background:#f0f0f0;border-right:2px solid #888;border-bottom:1px solid #888"></div>
<div class="a" style="left:501px;top:103px;width:309px;height:17px;background:#f0f0f0;border-bottom:1px solid #888"></div>
<div class="t" style="left:222px;top:104px">Birim</div>
<div class="t" style="left:332px;top:104px">Düzen</div>
<div class="t" style="left:377px;top:104px">Tür</div>
<div class="t" style="left:421px;top:104px;letter-spacing:-.25px">Dosya Sistemi</div>
<div class="t" style="left:506px;top:104px">Durum</div>
<div class="a" style="left:234px;top:122px;width:30px;height:16px;background:#f0f0f0"></div>
<svg style="left:219px;top:125px" width="14" height="8"><path d="M0 0h13v3H0z" fill="#d8d8d8"/><path d="M0 3h13v4H0z" fill="#333"/><path d="M9 5h2" stroke="#3c3"/></svg>
<svg style="left:219px;top:142px" width="14" height="8"><path d="M0 0h13v3H0z" fill="#d8d8d8"/><path d="M0 3h13v4H0z" fill="#333"/><path d="M9 5h2" stroke="#3c3"/></svg>
<svg style="left:219px;top:159px" width="14" height="8"><path d="M0 0h13v3H0z" fill="#d8d8d8"/><path d="M0 3h13v4H0z" fill="#333"/><path d="M9 5h2" stroke="#3c3"/></svg>
<div class="t" style="left:239px;top:122px">(C:)</div><div class="t" style="left:332px;top:122px">Basit</div><div class="t" style="left:377px;top:122px">Temel</div><div class="t" style="left:421px;top:122px">NTFS</div>
<div class="t" style="left:506px;top:122px;width:305px;overflow:hidden;letter-spacing:-.22px">Sağlam (Önyükleme, Disk Belleği Dosyası, Kilitlenme Bilgisi, Birincil bölüm)</div>
<div class="t" style="left:237px;top:139px;letter-spacing:-.25px">(Disk 0 Bölüm 1)</div><div class="t" style="left:332px;top:139px">Basit</div><div class="t" style="left:377px;top:139px">Temel</div><div class="t" style="left:506px;top:139px;letter-spacing:-.27px">Sağlam (EFI Sistem Bölümü)</div>
<div class="t" style="left:237px;top:156px;letter-spacing:-.25px">(Disk 0 Bölüm 4)</div><div class="t" style="left:332px;top:156px">Basit</div><div class="t" style="left:377px;top:156px">Temel</div><div class="t" style="left:506px;top:156px;letter-spacing:-.07px">Sağlam (Kurtarma Bölümü)</div>
<div class="a" style="left:216px;top:384px;width:594px;height:15px;background:#f0f0f0"></div>
<div class="a" style="left:233px;top:384px;width:375px;height:15px;background:#cdcdcd"></div>
<svg style="left:221px;top:388px" width="6" height="8"><path d="M5 .500 1.500 4 5 7.500" fill="none" stroke="#555" stroke-width="1.500"/></svg>
<svg style="left:799px;top:388px" width="6" height="8"><path d="M1 .500 4.500 4 1 7.500" fill="none" stroke="#555" stroke-width="1.500"/></svg>
<div class="a" style="left:216px;top:399px;width:594px;height:9px;background:#fff"></div>
<div class="a" style="left:216px;top:404px;width:594px;height:3px;background:#f0f0f0;border-top:1px solid #999;box-sizing:border-box"></div>

<!-- Disk area -->
<div class="a" style="left:216px;top:407px;width:594px;height:273px;background:#fff"></div>
<div class="a" style="left:216px;top:413px;width:103px;height:97px;background:#f0f0f0"></div>
<div class="a" style="left:216px;top:512px;width:103px;height:97px;background:#f0f0f0"></div>
<div class="a" style="left:216px;top:611px;width:103px;height:69px;background:#f0f0f0"></div>
<div class="a" style="left:320px;top:512px;width:474px;height:97px;background:#f0f0f0"></div>
<div class="a" style="left:320px;top:611px;width:474px;height:69px;background:#f0f0f0"></div>
<div class="a" style="left:216px;top:511px;width:578px;height:1px;background:#a8a8a8"></div>
<div class="a" style="left:216px;top:610px;width:578px;height:1px;background:#a8a8a8"></div>
<div class="a" style="left:319px;top:413px;width:1px;height:267px;background:#b4b4b4"></div>
<div class="a" style="left:227px;top:425px;width:14px;height:5px;background:linear-gradient(#b8b8b8 50%,#333 50%)"></div>
<div class="t" style="left:243px;top:421px;font-weight:700;letter-spacing:-.3px">Disk 0</div>
<div class="t" style="left:225px;top:436px">Temel</div><div class="t" style="left:225px;top:451px">465,75 GB</div><div class="t" style="left:225px;top:466px">Çevrimiçi</div>
<div class="a" style="left:227px;top:524px;width:14px;height:5px;background:linear-gradient(#c0c0c0 50%,#777 50%)"></div>
<div class="t" style="left:243px;top:520px;font-weight:700;letter-spacing:-.3px">Disk 1</div>
<div class="t" style="left:225px;top:535px">Çıkarılabilir (E:)</div><div class="t" style="left:225px;top:565px">Medya Yok</div>
<div class="a" style="left:227px;top:623px;width:14px;height:5px;background:linear-gradient(#c0c0c0 50%,#777 50%)"></div>
<div class="t" style="left:243px;top:619px;font-weight:700;letter-spacing:-.3px">Disk 2</div>
<div class="t" style="left:225px;top:634px">Çıkarılabilir (F:)</div><div class="t" style="left:225px;top:664px">Medya Yok</div>

<div class="a" style="left:321px;top:419px;width:58px;height:13px;background:#000080"></div>
<div class="a" style="left:382px;top:419px;width:163px;height:13px;background:#000080"></div>
<div class="a" style="left:548px;top:419px;width:79px;height:13px;background:#000080"></div>
<div class="a" style="left:630px;top:419px;width:159px;height:13px;background:#000"></div>
<div class="a" style="left:321px;top:433px;width:58px;height:74px;background:#e0e0e0"></div>
<div class="a" style="left:324px;top:435px;width:53px;height:67px;background:#fff;border-left:1px solid #999;border-top:1px solid #999;box-sizing:border-box"></div>
<div class="t" style="left:328px;top:453px">100 MB</div><div class="t" style="left:328px;top:468px">Sağlam (</div>
<div class="a" style="left:382px;top:432px;width:163px;height:76px;background:#bcbcbc"></div>
<svg style="left:386px;top:435px" width="157" height="69"><defs><pattern id="h" width="8" height="8" patternUnits="userSpaceOnUse"><rect width="8" height="8" fill="#fff"/><path d="M-1 9 9-1" stroke="#a0a0a0" stroke-width=".8"/></pattern></defs><rect width="157" height="69" fill="url(#h)"/></svg>
<div class="t" style="left:394px;top:438px;font-weight:700;background:#fff;padding:0 1px">(C:)</div>
<div class="t" style="left:389px;top:453px;background:#fff">274,75 GB NTFS</div><div class="t" style="left:389px;top:468px;background:#fff">Sağlam (Önyükleme)</div>
<div class="a" style="left:548px;top:433px;width:79px;height:74px;background:#e0e0e0"></div>
<div class="a" style="left:551px;top:435px;width:74px;height:67px;background:#fff;border-left:1px solid #999;border-top:1px solid #999;box-sizing:border-box"></div>
<div class="t" style="left:555px;top:453px">510 MB</div><div class="t" style="left:555px;top:468px">Sağlam (Kurtarma)</div>
<div class="a" style="left:630px;top:433px;width:159px;height:74px;background:#e0e0e0"></div>
<div class="a" style="left:633px;top:435px;width:153px;height:67px;background:#fff;border-left:1px solid #999;border-top:1px solid #999;box-sizing:border-box"></div>
<div class="t" style="left:637px;top:453px">190,40 GB</div><div class="t" style="left:639px;top:468px">Ayrılmamış</div>

<div class="a" style="left:794px;top:408px;width:16px;height:272px;background:#f0f0f0"></div>
<div class="a" style="left:794px;top:425px;width:14px;height:119px;background:#cdcdcd"></div>
<svg style="left:797px;top:414px" width="8" height="6"><path d="M.5 5 4 1.500 7.500 5" fill="none" stroke="#555" stroke-width="1.500"/></svg>
<svg style="left:797px;top:668px" width="8" height="6"><path d="M.5 1 4 4.500 7.500 1" fill="none" stroke="#555" stroke-width="1.500"/></svg>
<div class="a" style="left:216px;top:680px;width:594px;height:18px;background:#f0f0f0"></div>
<div class="a" style="left:222px;top:683px;width:10px;height:12px;background:#000"></div>
<div class="t" style="left:237px;top:681px;letter-spacing:0">Ayrılmamış</div>
<div class="a" style="left:303px;top:683px;width:10px;height:12px;background:#000080"></div>
<div class="t" style="left:318px;top:681px;letter-spacing:.17px">Birincil bölüm</div>

<!-- Right pane -->
<div class="a" style="left:816px;top:101px;width:187px;height:598px;background:#fff;border:1px solid #a0a0a0;border-left:2px solid #909090;border-top:2px solid #888;box-sizing:border-box"></div>
<div class="a" style="left:818px;top:103px;width:184px;height:20px;background:#f0f0f0;border-bottom:1px solid #aaa;box-sizing:border-box"></div>
<div class="t" style="left:822px;top:105px;font-weight:700;letter-spacing:-.3px">Eylemler</div>
<div class="a" style="left:817px;top:124px;width:186px;height:25px;background:linear-gradient(#bad2ea,#9cb8d6)"></div>
<div class="t" style="left:824px;top:129px">Disk Yönetimi</div>
<svg style="left:987px;top:133px" width="10" height="6"><path d="M0 5.500h10L5 .5z" fill="#000"/></svg>
<div class="t" style="left:848px;top:153px;letter-spacing:-.3px">Ek Eylemler</div>
<svg style="left:989px;top:156px" width="6" height="10"><path d="M0 0l5 5-5 5z" fill="#000"/></svg>

<!-- Status bar -->
<div class="a" style="left:784px;top:703px;width:1px;height:20px;background:#cfcfcf"></div>
<div class="a" style="left:917px;top:703px;width:1px;height:20px;background:#cfcfcf"></div>

<!-- Context Menu -->
<div class="a" style="left:414px;top:463px;width:247px;height:274px;background:#f0f0f0;border:1px solid #a8a8a8;box-shadow:2px 2px 3px rgba(0,0,0,.35)"></div>
<div class="a" style="left:417px;top:590px;width:243px;height:22px;background:#e3e3e3"></div>
<div class="m" style="top:469px">Aç</div>
<div class="m" style="top:491px">Araştır</div>
<div class="s" style="top:513px"></div>
<div class="m g" style="top:520px">Bölümü Etkin Olarak İşaretle</div>
<div class="m" style="top:542px">Sürücü Harfi ve Yolu Değiştir...</div>
<div class="m g" style="top:564px">Biçimlendir...</div>
<div class="s" style="top:586px"></div>
<div class="m g" style="top:593px">Birimi Genişlet...</div>
<div class="m" style="top:615px">Birimi Küçült...</div>
<div class="m g" style="top:637px">Yansıtma Ekle...</div>
<div class="m g" style="top:659px">Birim Sil...</div>
<div class="s" style="top:681px"></div>
<div class="m" style="top:688px">Özellikler</div>
<div class="s" style="top:710px"></div>
<div class="m" style="top:717px">Yardım</div>
</body></html>
